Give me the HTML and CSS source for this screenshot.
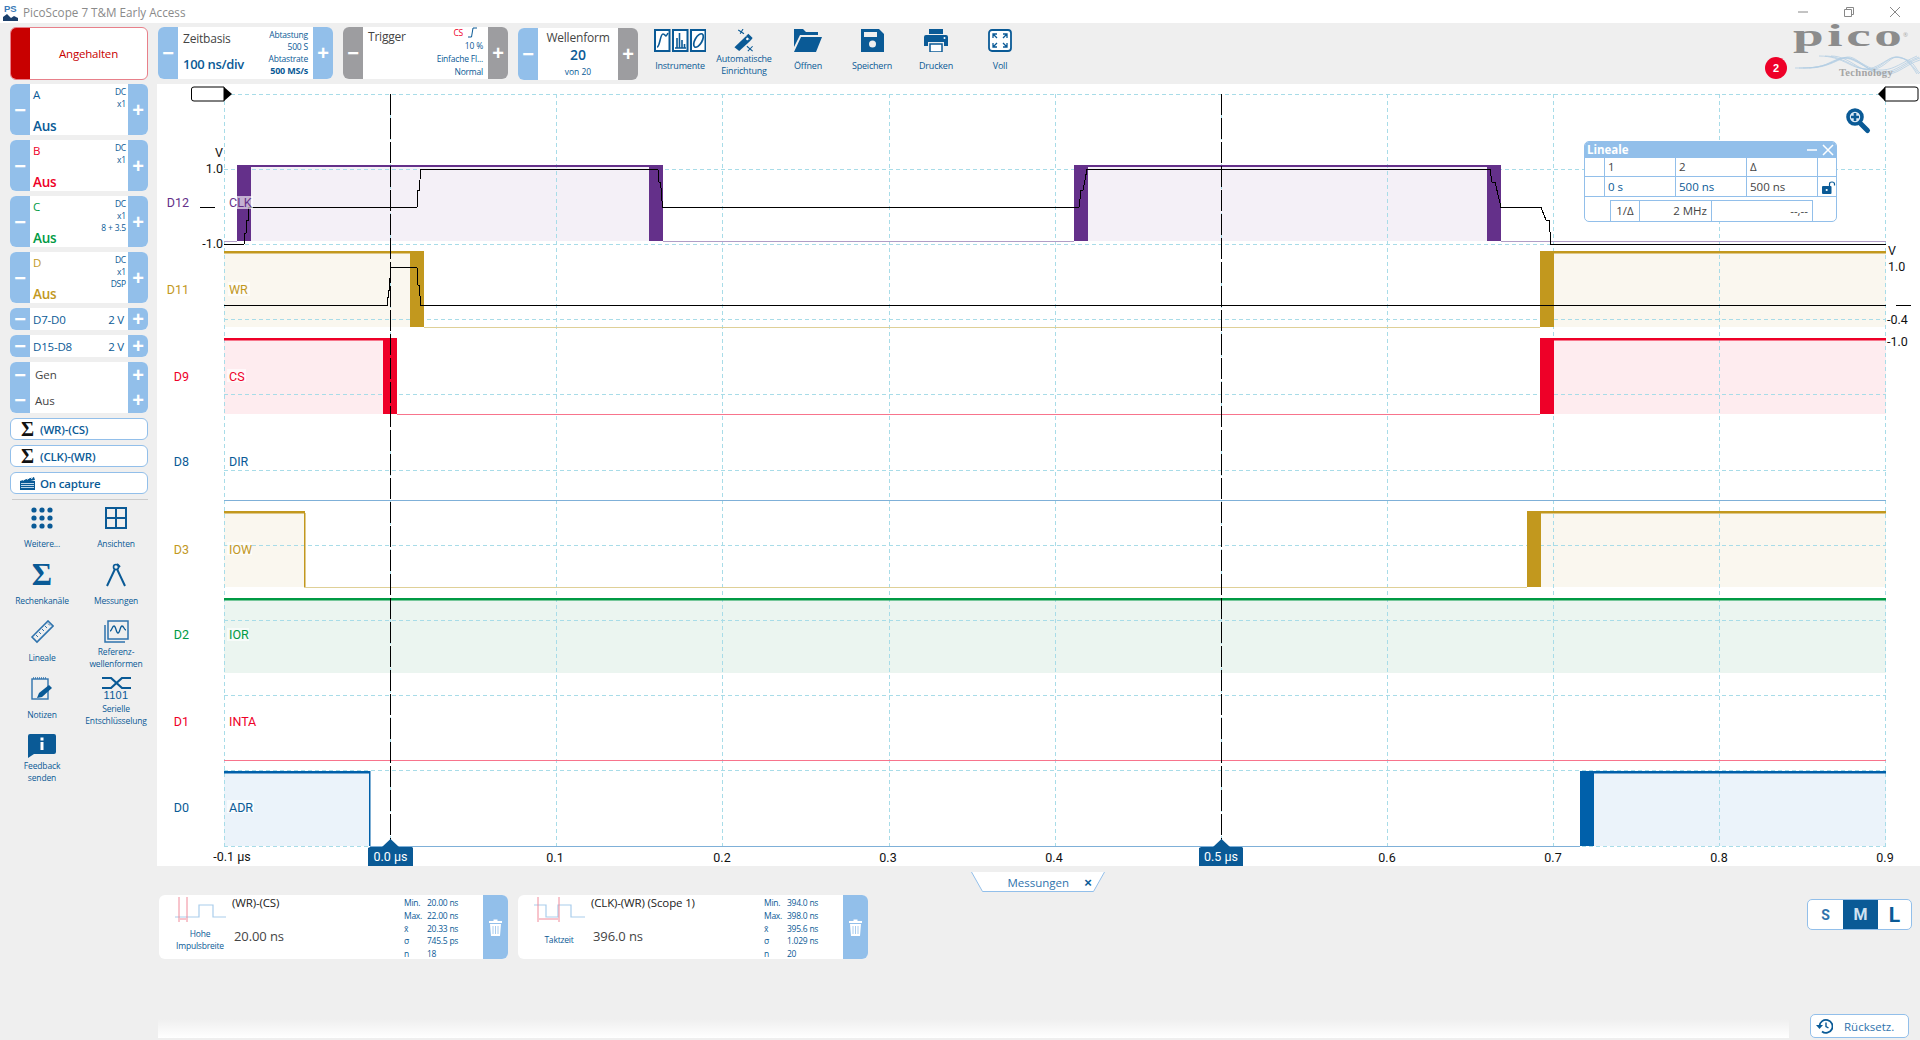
FILE: index.html
```html
<!DOCTYPE html>
<html lang="de">
<head>
<meta charset="utf-8">
<title>PicoScope 7 T&amp;M Early Access</title>
<link rel="stylesheet" href="styles.css">
</head>
<body>
<header class="titlebar">
  <svg class="app-icon" width="16" height="20" viewBox="0 0 16 20"><rect x="0" y="1" width="15" height="18" fill="#fff"/><text x="1" y="10" class="ps">PS</text><path d="M0 15 4 12 8 16 11 14 15 16V19H0Z" fill="#1b3f6b"/></svg>
  <span class="app-name">PicoScope 7 T&amp;M Early Access</span>
  <div class="winctl">
    <svg width="12" height="12" viewBox="0 0 12 12"><path d="M1 6H11" stroke="#888"/></svg>
    <svg width="12" height="12" viewBox="0 0 12 12"><path d="M1.5 3.5H8.5V10.5H1.5ZM3.5 3.5V1.5H10.5V8.5H8.5" fill="none" stroke="#888"/></svg>
    <svg width="12" height="12" viewBox="0 0 12 12"><path d="M1 1 11 11M11 1 1 11" stroke="#888"/></svg>
  </div>
</header>

<div class="toolbar">
  <div class="run-btn"><span class="run-bar"></span><span class="run-text">Angehalten</span></div>

  <div class="stepper w175">
    <span class="strip">−</span>
    <div class="st-body">
      <div class="st-left"><span class="st-title">Zeitbasis</span><span class="st-big">100 ns/div</span></div>
      <div class="st-right"><span>Abtastung</span><span>500 S</span><span>Abtastrate</span><b>500 MS/s</b></div>
    </div>
    <span class="strip">+</span>
  </div>

  <div class="stepper w165">
    <span class="strip gray">−</span>
    <div class="st-body">
      <div class="st-left"><span class="st-title trig-title">Trigger</span></div>
      <div class="st-right trig">
        <span class="trig-top"><i class="red">CS</i><svg width="9" height="11" viewBox="0 0 9 11"><path d="M0 10H3.5L5 1H9" fill="none" stroke="#0a5a96"/></svg></span>
        <span>10 %</span><span>Einfache Fl...</span><span>Normal</span>
      </div>
    </div>
    <span class="strip gray">+</span>
  </div>

  <div class="stepper w120 down1">
    <span class="strip">−</span>
    <div class="st-center"><span class="st-title">Wellenform</span><b>20</b><small>von 20</small></div>
    <span class="strip gray">+</span>
  </div>

  <div class="tools">
    <div class="tool">
      <svg width="52" height="23" viewBox="0 0 52 23"><g fill="#fff" stroke="#0a5a96" stroke-width="2"><rect x="1" y="1" width="14.5" height="21"/><rect x="19" y="1" width="14.5" height="21"/><rect x="37" y="1" width="14.5" height="21"/></g><path d="M3 18C6 18 6 5 9 5S11 10 14 4" fill="none" stroke="#0a5a96" stroke-width="1.6"/><path d="M21 19H32M23 19V9M25.500 19V4M28 19V11M30.500 19V15" fill="none" stroke="#0a5a96" stroke-width="1.6"/><ellipse cx="44.500" cy="11.500" rx="3.500" ry="7.500" transform="rotate(30 44.500 11.500)" fill="none" stroke="#0a5a96" stroke-width="1.7"/></svg>
      <span class="lbl1">Instrumente</span>
    </div>
    <div class="tool">
      <svg width="24" height="24" viewBox="0 0 24 24"><path d="M2 19 14 7.500 19 12 7 23Z" fill="#0a5a96"/><path d="M14 7.500 16.500 5 21 9.500 19 12Z" fill="#0a5a96"/><circle cx="15.500" cy="10.500" r="1.300" fill="#fff"/><path d="M6 1 12 5M11 0 8 5M15 18 21 23M21 18 16 23" stroke="#0a5a96" stroke-width="1.100"/></svg>
      <span class="lbl2">Automatische<br>Einrichtung</span>
    </div>
    <div class="tool">
      <svg width="28" height="23" viewBox="0 0 28 23"><path d="M0 0H9L12 3H24V6H6L0 18Z" fill="#0a5a96"/><path d="M7 8H28L22 23H0Z" fill="#0a5a96"/></svg>
      <span class="lbl1">Öffnen</span>
    </div>
    <div class="tool">
      <svg width="23" height="23" viewBox="0 0 23 23"><path d="M0 0H18L23 5V23H0Z" fill="#0a5a96"/><rect x="3" y="3" width="13" height="5" fill="#efefef"/><circle cx="11.500" cy="15" r="3.500" fill="#efefef"/></svg>
      <span class="lbl1">Speichern</span>
    </div>
    <div class="tool">
      <svg width="24" height="23" viewBox="0 0 24 23"><rect x="5" y="0" width="14" height="5" fill="#0a5a96"/><path d="M2 6H22Q24 6 24 8V17H20V13H4V17H0V8Q0 6 2 6Z" fill="#0a5a96"/><rect x="6" y="15" width="12" height="8" fill="#fff" stroke="#0a5a96" stroke-width="1.500"/><circle cx="20.500" cy="9" r="1" fill="#fff"/></svg>
      <span class="lbl1">Drucken</span>
    </div>
    <div class="tool">
      <svg width="24" height="23" viewBox="0 0 24 23"><rect x="1" y="1" width="22" height="21" rx="3" fill="#fff" stroke="#0a5a96" stroke-width="1.800"/><path d="M5 9V5H9M5 5 9 9M19 9V5H15M19 5 15 9M5 14V18H9M5 18 9 14M19 14V18H15M19 18 15 14" fill="none" stroke="#0a5a96" stroke-width="1.300"/></svg>
      <span class="lbl1">Voll</span>
    </div>
  </div>

  <div class="logo">
    <span class="pico">pico</span>
    <span class="reg">®</span>
    <svg class="logo-wave" width="125" height="20" viewBox="0 0 125 20"><g fill="none" stroke="#b4cee3" stroke-width=".8"><path d="M0 13C16 13 24 13 34 8S50 1 60 5 76 16 88 15 106 8 122 1"/><path d="M4 13C18 13 28 12 38 7S52 2 62 7 78 18 90 17 108 8 124 2"/><path d="M8 13C22 13 32 10 42 5S56 3 66 9 80 19 92 18 110 8 125 3"/><path d="M14 13C26 13 36 9 46 4S60 4 70 11 84 20 94 19 112 9 125 5"/><path d="M24 1C36 1 44 4 54 9S72 16 82 11 96 1 104 2 116 10 122 19"/><path d="M30 1C40 1 48 5 58 10S76 17 86 10 98 1 106 3 118 12 124 19"/><path d="M36 1C46 1 54 6 62 11S80 17 90 9 100 1 110 4 120 14 125 18"/></g></svg>
    <span class="tech">Technology</span>
    <span class="badge">2</span>
  </div>
</div>

<div class="workspace">
  <aside class="side">
    <div class="chan"><span class="strip">−</span><div class="ch-body"><div class="ch-left blue"><span>A</span><b>Aus</b></div><div class="ch-right"><span>DC</span><span>x1</span></div></div><span class="strip">+</span></div>
    <div class="chan"><span class="strip">−</span><div class="ch-body"><div class="ch-left red"><span>B</span><b>Aus</b></div><div class="ch-right"><span>DC</span><span>x1</span></div></div><span class="strip">+</span></div>
    <div class="chan"><span class="strip">−</span><div class="ch-body"><div class="ch-left green"><span>C</span><b>Aus</b></div><div class="ch-right"><span>DC</span><span>x1</span><span>8 + 3.5</span></div></div><span class="strip">+</span></div>
    <div class="chan"><span class="strip">−</span><div class="ch-body"><div class="ch-left gold"><span>D</span><b>Aus</b></div><div class="ch-right"><span>DC</span><span>x1</span><span>DSP</span></div></div><span class="strip">+</span></div>
    <div class="digi"><span class="strip">−</span><div class="dg-body"><span>D7-D0</span><span>2 V</span></div><span class="strip">+</span></div>
    <div class="digi"><span class="strip">−</span><div class="dg-body"><span>D15-D8</span><span>2 V</span></div><span class="strip">+</span></div>
    <div class="gen">
      <div class="gen-row"><span class="strip">−</span><span class="gen-text">Gen</span><span class="strip">+</span></div>
      <div class="gen-row"><span class="strip">−</span><span class="gen-text">Aus</span><span class="strip">+</span></div>
    </div>
    <div class="mbtn"><span class="sig">Σ</span><span>(WR)-(CS)</span></div>
    <div class="mbtn"><span class="sig">Σ</span><span>(CLK)-(WR)</span></div>
    <div class="mbtn">
      <svg class="clap" width="15" height="13" viewBox="0 0 15 13"><rect x="0" y="4" width="15" height="9" fill="#0a5a96"/><path d="M0 4 14 0 15 3 1 6Z" fill="#0a5a96"/><path d="M3 3.500 5 1.800M7 2.500 9 1M11 1.500 13 .5" stroke="#fff"/><path d="M1 6.500H14M1 8.500H14M1 10.500H14" stroke="#bcd6ea"/></svg>
      <span>On capture</span>
    </div>
    <hr class="sep">
    <div class="sidetools">
      <div class="st">
        <svg width="24" height="24" viewBox="0 0 24 24"><g fill="#0a5a96"><circle cx="4" cy="4" r="2.600"/><circle cx="12" cy="4" r="2.600"/><circle cx="20" cy="4" r="2.600"/><circle cx="4" cy="12" r="2.600"/><circle cx="12" cy="12" r="2.600"/><circle cx="20" cy="12" r="2.600"/><circle cx="4" cy="20" r="2.600"/><circle cx="12" cy="20" r="2.600"/><circle cx="20" cy="20" r="2.600"/></g></svg>
        <span class="st-lbl">Weitere...</span>
      </div>
      <div class="st">
        <svg width="22" height="24" viewBox="0 0 22 24"><path d="M1 2H21V22H1ZM11 2V22M1 12H21" fill="none" stroke="#0a5a96" stroke-width="2"/></svg>
        <span class="st-lbl">Ansichten</span>
      </div>
      <div class="st">
        <span class="bigsig">Σ</span>
        <span class="st-lbl">Rechenkanäle</span>
      </div>
      <div class="st">
        <svg width="22" height="24" viewBox="0 0 22 24"><circle cx="11" cy="4" r="2.500" fill="none" stroke="#0a5a96" stroke-width="1.600"/><path d="M10 6 2 23M12 6 20 23M12 1 15 4" fill="none" stroke="#0a5a96" stroke-width="2"/></svg>
        <span class="st-lbl">Messungen</span>
      </div>
      <div class="st">
        <svg width="24" height="24" viewBox="0 0 24 24"><path d="M2 17 18 1 23 6 7 22Z" fill="none" stroke="#2f73ad" stroke-width="1.600"/><path d="M6 15 8 17M9 12 11 14M12 9 14 11M15 6 17 8M18 3.500 20 5.500" stroke="#2f73ad"/></svg>
        <span class="st-lbl">Lineale</span>
      </div>
      <div class="st">
        <svg width="26" height="24" viewBox="0 0 26 24"><rect x="5" y="1" width="20" height="18" fill="none" stroke="#2f73ad" stroke-width="1.500"/><path d="M2 5V22H22" fill="none" stroke="#2f73ad" stroke-width="1.500"/><path d="M7 11C9 11 9 6 11 6S13 13 15 13 17 6 19 6 21 10 23 10" fill="none" stroke="#0a5a96" stroke-width="1.300"/></svg>
        <span class="st-lbl">Referenz-<br>wellenformen</span>
      </div>
      <div class="st">
        <svg width="22" height="24" viewBox="0 0 22 24"><rect x="1" y="2" width="16" height="20" fill="none" stroke="#2f73ad" stroke-width="1.400"/><path d="M2 1H16" stroke="#2f73ad" stroke-width="1.500" stroke-dasharray="1 1"/><path d="M6 21 8 16 18 8 21 11 11 20Z" fill="#0a5a96"/></svg>
        <span class="st-lbl">Notizen</span>
      </div>
      <div class="st st-serial">
        <svg width="29" height="13" viewBox="0 0 29 13"><path d="M0 1H9L20 11H29M0 11H9L20 1H29" fill="none" stroke="#0a5a96" stroke-width="2.200"/></svg>
        <span class="dig">1101</span>
        <span class="st-lbl">Serielle<br>Entschlüsselung</span>
      </div>
      <div class="st">
        <svg width="28" height="24" viewBox="0 0 28 24"><path d="M2 0H26Q28 0 28 2V18Q28 20 26 20H6L0 24V2Q0 0 2 0Z" fill="#0a5a96"/><rect x="12.500" y="8" width="3" height="8" fill="#fff"/><rect x="12.500" y="3.500" width="3" height="3" fill="#fff"/></svg>
        <span class="st-lbl">Feedback<br>senden</span>
      </div>
    </div>
  </aside>

  <main class="content">
    <section class="plot">
      <svg class="scope" width="1763" height="782" viewBox="157 84 1763 782">
        <!-- band fills -->
        <g>
          <path class="f-pur" d="M251 167H649V241H251ZM1088 167H1487V241H1088Z"/>
          <path class="f-gold" d="M224 253H410V327H224ZM1554 253H1886V327H1554ZM224 513H304V587H224ZM1541 513H1886V587H1541Z"/>
          <path class="f-red" d="M224 340H383V414H224ZM1554 340H1886V414H1554Z"/>
          <path class="f-grn" d="M224 600H1886V673H224Z"/>
          <path class="f-blu" d="M224 773H370V846H224ZM1594 773H1886V846H1594Z"/>
        </g>
        <!-- grid -->
        <g class="grid">
          <path d="M224 94H1886M224 169.200H1886M224 244.400H1886M224 319.600H1886M224 394.800H1886M224 470H1886M224 545.200H1886M224 620.400H1886M224 695.600H1886M224 770.800H1886M224 846H1886"/>
          <path d="M224.500 94V846M390.500 94V846M556.500 94V846M722.500 94V846M889.500 94V846M1055.500 94V846M1221.500 94V846M1387.500 94V846M1553.500 94V846M1719.500 94V846M1885.500 94V846"/>
        </g>
        <!-- low lines -->
        <g class="low">
          <path stroke="#b09dc6" d="M224 241.500H237M663 241.500H1074M1501 241.500H1886"/>
          <path stroke="#dfd097" d="M424 327.500H1540M304 587.500H1527"/>
          <path stroke="#f8748c" d="M397 414.500H1540M224 760.500H1886"/>
          <path stroke="#7fb0d8" d="M224 500.500H1886M370 846.500H1580"/>
        </g>
        <!-- highs and transitions -->
        <path class="f-pd" d="M237 165H649V167H251V241H237ZM649 165H663V241H649ZM1074 165H1487V167H1088V241H1074ZM1487 165H1501V241H1487Z"/>
        <path class="f-gd" d="M224 251H424V327H410V253.500H224ZM1540 251H1886V253.500H1554V327H1540ZM224 511H305V513.500H224ZM304 513H305.500V587H304ZM1527 511H1886V513.500H1541V587H1527Z"/>
        <path class="f-rd" d="M224 338H397V414H383V340.500H224ZM1540 338H1886V340.500H1554V414H1540Z"/>
        <rect class="f-gn" x="224" y="598" width="1662" height="2.500"/>
        <path class="f-bd" d="M224 771H370.500V846H369V773.500H224ZM1580 771H1886V773.500H1594V846H1580Z"/>
        <!-- math traces -->
        <g class="trace">
          <path d="M224 244.500H244L245 233H246L247 220H248V207.500H417L418 190H419.500L420.500 169.500H658L659 182H660.500L662.500 207.500H1079L1081 190H1083L1087 169.500H1490L1492 182H1495L1501 207.500H1541L1546 220H1549L1551 244.500H1886"/>
          <path d="M224 305.500H387.500L388.500 290H389.500L390.500 267.500H417L418 285H419.500L420.500 305.500H1886"/>
          <path d="M200 207.500H215M1896 305.500H1911"/>
        </g>
        <!-- row labels -->
        <g class="rowlab">
          <text class="t-pur" x="189" y="207" text-anchor="end">D12</text>
          <text class="t-gold" x="189" y="294" text-anchor="end">D11</text>
          <text class="t-red" x="189" y="381" text-anchor="end">D9</text>
          <text class="t-blu" x="189" y="466" text-anchor="end">D8</text>
          <text class="t-gold" x="189" y="554" text-anchor="end">D3</text>
          <text class="t-grn" x="189" y="639" text-anchor="end">D2</text>
          <text class="t-red" x="189" y="726" text-anchor="end">D1</text>
          <text class="t-blu" x="189" y="812" text-anchor="end">D0</text>
        </g>
        <g class="tagbg">
          <rect x="228" y="196" width="25" height="13"/><rect x="228" y="282" width="22" height="14"/><rect x="227" y="369" width="19" height="13"/><rect x="228" y="454" width="22" height="14"/><rect x="227" y="542" width="25" height="13"/><rect x="227" y="628" width="22" height="13"/><rect x="227" y="800" width="27" height="13"/>
        </g>
        <g class="rowlab">
          <text class="t-pur" x="229" y="207">CLK</text>
          <text class="t-gold" x="229" y="294">WR</text>
          <text class="t-red" x="229" y="381">CS</text>
          <text class="t-blu" x="229" y="466">DIR</text>
          <text class="t-gold" x="229" y="554">IOW</text>
          <text class="t-grn" x="229" y="639">IOR</text>
          <text class="t-red" x="229" y="726">INTA</text>
          <text class="t-blu" x="229" y="812">ADR</text>
        </g>
        <!-- axis labels -->
        <g class="axis">
          <text x="223" y="157" text-anchor="end">V</text>
          <text x="223" y="173" text-anchor="end">1.0</text>
          <text x="223" y="248" text-anchor="end">-1.0</text>
          <text x="1888" y="255">V</text>
          <text x="1888" y="271">1.0</text>
          <text x="1887" y="324">-0.4</text>
          <text x="1887" y="346">-1.0</text>
          <text x="232" y="861" text-anchor="middle">-0.1 µs</text>
          <text x="555" y="862" text-anchor="middle">0.1</text>
          <text x="722" y="862" text-anchor="middle">0.2</text>
          <text x="888" y="862" text-anchor="middle">0.3</text>
          <text x="1054" y="862" text-anchor="middle">0.4</text>
          <text x="1387" y="862" text-anchor="middle">0.6</text>
          <text x="1553" y="862" text-anchor="middle">0.7</text>
          <text x="1719" y="862" text-anchor="middle">0.8</text>
          <text x="1885" y="862" text-anchor="middle">0.9</text>
        </g>
        <!-- cursors -->
        <path class="cursor" d="M390.500 94V840M1221.500 94V840"/>
        <path class="tag" d="M370 847H382L390.500 839 399 847H412L413 848V866H368V848ZM1201 847H1213L1221.500 839 1230 847H1242L1243 848V866H1199V848Z"/>
        <text class="tagtext" x="390.500" y="861" text-anchor="middle">0.0 µs</text>
        <text class="tagtext" x="1221" y="861" text-anchor="middle">0.5 µs</text>
        <!-- drag handles -->
        <path class="handle" d="M224 87H194Q191.500 87 191.500 89V99Q191.500 101 194 101H224Z"/>
        <path d="M224 87 232 94 224 101Z"/>
        <path class="handle" d="M1885 87H1915Q1918 87 1918 89V99Q1918 101 1915 101H1885Z"/>
        <path d="M1885 87 1878 94 1885 101Z"/>
        <!-- zoom icon -->
        <g>
          <path d="M1861 124 1867.500 130.500" stroke="#0a5a96" stroke-width="5" stroke-linecap="round"/>
          <circle cx="1855" cy="117" r="7" fill="#dceaf6" stroke="#0a5a96" stroke-width="3.600"/>
          <path d="M1851 117H1859M1855 113V121" stroke="#0a5a96" stroke-width="2.600"/>
        </g>
      </svg>

      <div class="rulers">
        <div class="r-head"><span>Lineale</span><svg width="28" height="14" viewBox="0 0 28 14"><path d="M0 7H10M16 2 26 12M26 2 16 12" stroke="#fff" stroke-width="1.500"/></svg></div>
        <div class="r-row r-h1"><i></i><i>1</i><i>2</i><i>Δ</i><i></i></div>
        <div class="r-row r-h2"><i></i><i class="bl">0 s</i><i class="bl">500 ns</i><i>500 ns</i><i class="lock"><svg width="14" height="13" viewBox="0 0 14 13"><rect x="0" y="5" width="9.500" height="8" rx="1" fill="#0a5a96"/><circle cx="4.700" cy="9" r="1.100" fill="#fff"/><path d="M7.500 5V3Q7.500 1 10 1T12.500 3V4.500" fill="none" stroke="#0a5a96" stroke-width="1.200"/></svg></i></div>
        <div class="r-last"><i>1/Δ</i><i class="ar">2 MHz</i><i class="ar">--,--</i></div>
      </div>
    </section>

    <section class="bottom">
      <div class="tab">
        <svg class="tab-shape" width="134" height="20" viewBox="0 0 134 20"><path d="M.5 0 11.500 19.500H122.500L133.500 0" fill="#fff" stroke="#92bfea"/></svg>
        <span class="tab-t">Messungen</span><b>×</b>
      </div>
      <div class="cards-row">
        <div class="cards">
          <article class="card">
            <div class="m-pic">
              <svg width="51" height="25" viewBox="0 0 51 25"><path d="M0 20H24V8H38V20H51" fill="none" stroke="#a9cdec" stroke-width="1.200"/><path d="M4 0V25M12 0V25M5 22H11" stroke="#f08a9a"/></svg>
              <span class="m-lab">Hohe<br>Impulsbreite</span>
            </div>
            <div class="m-mid"><span class="m-name">(WR)-(CS)</span><span class="m-val">20.00 ns</span></div>
            <dl class="m-stats"><dt>Min.</dt><dd>20.00 ns</dd><dt>Max.</dt><dd>22.00 ns</dd><dt>x̄</dt><dd>20.33 ns</dd><dt>σ</dt><dd>745.5 ps</dd><dt>n</dt><dd>18</dd></dl>
            <div class="trash"><svg width="13" height="17" viewBox="0 0 13 17"><path d="M0 2H4.500V.5H8.500V2H13V4H0ZM1 5H12L11 17H2ZM4 7V15M6.500 7V15M9 7V15" fill="#fff"/><path d="M4 7V15M6.500 7V15M9 7V15" stroke="#92bfea" stroke-width=".8"/></svg></div>
          </article>
          <article class="card">
            <div class="m-pic">
              <svg width="51" height="25" viewBox="0 0 51 25"><path d="M0 8H12V20H24V8H37V20H51" fill="none" stroke="#a9cdec" stroke-width="1.200"/><path d="M4 0V25M25 0V25M5 22H24" stroke="#f08a9a"/></svg>
              <span class="m-lab">Taktzeit</span>
            </div>
            <div class="m-mid"><span class="m-name">(CLK)-(WR) (Scope 1)</span><span class="m-val">396.0 ns</span></div>
            <dl class="m-stats"><dt>Min.</dt><dd>394.0 ns</dd><dt>Max.</dt><dd>398.0 ns</dd><dt>x̄</dt><dd>395.6 ns</dd><dt>σ</dt><dd>1.029 ns</dd><dt>n</dt><dd>20</dd></dl>
            <div class="trash"><svg width="13" height="17" viewBox="0 0 13 17"><path d="M0 2H4.500V.5H8.500V2H13V4H0ZM1 5H12L11 17H2ZM4 7V15M6.500 7V15M9 7V15" fill="#fff"/><path d="M4 7V15M6.500 7V15M9 7V15" stroke="#92bfea" stroke-width=".8"/></svg></div>
          </article>
        </div>
        <div class="sizes"><span class="sz-s">S</span><span class="sz-m">M</span><span class="sz-l">L</span></div>
      </div>
      <div class="foot">
        <div class="stripe"></div>
        <div class="reset"><svg width="17" height="16" viewBox="0 0 17 16"><path d="M3.500 8A6.500 6.500 0 1 1 6 13.500" fill="none" stroke="#0a5a96" stroke-width="1.800"/><path d="M0 7H7L3.500 11Z" fill="#0a5a96"/><path d="M10 4.500V8.500L12.500 10" fill="none" stroke="#0a5a96" stroke-width="1.400"/></svg><span>Rücksetz.</span></div>
      </div>
    </section>
  </main>
</div>
</body>
</html>
```

FILE: styles.css
```css
* { box-sizing: border-box; }
html, body { margin: 0; padding: 0; overflow: hidden; }
body {
  width: 1920px; height: 1040px;
  background: #efefef; color: #333;
  font-family: "Open Sans", "Noto Sans", sans-serif;
  display: flex; flex-direction: column;
}
.titlebar {
  height: 23px; background: #fff; display: flex; align-items: center; padding-left: 3px; flex: none;
}
.app-icon { margin-right: 4px; }
.ps { font-family: "Liberation Sans", sans-serif; font-size: 9.5px; font-weight: 700; fill: #3a7ab8; }
.app-name { font-size: 11.700px; color: #8a8a8a; }
.winctl { margin-left: auto; display: flex; gap: 34px; padding-right: 19px; }

.toolbar {
  height: 61px; flex: none; display: flex; padding: 4px 0 0 10px; gap: 10px; position: relative;
}
.run-btn {
  width: 138px; height: 53px; background: #fff; border: 1px solid #e8808a; border-radius: 6px;
  overflow: hidden; display: flex; align-items: center;
}
.run-bar { width: 19px; height: 100%; background: #c80000; }
.run-text { flex: 1; text-align: center; color: #c80000; font-size: 11.500px; letter-spacing: -.2px; }

.strip {
  width: 20px; flex: none; background: #92bfea; color: #fff; display: flex; align-items: center; justify-content: center;
  font-size: 20px; font-weight: 700; line-height: 1; font-family: "Liberation Sans", sans-serif;
}
.strip.gray { background: #9d9da0; }
.stepper { height: 52px; display: flex; border-radius: 6px; overflow: hidden; background: #fff; }
.w175 { width: 175px; }
.w165 { width: 165px; }
.w120 { width: 120px; }
.down1 { margin-top: 1px; height: 52px; }
.st-body { flex: 1; display: flex; justify-content: space-between; padding: 2px 5px; }
.st-left { display: flex; flex-direction: column; justify-content: space-between; }
.st-title { font-size: 12px; color: #444; line-height: 20px; letter-spacing: -.2px; }
.trig-title { margin-top: -2px; }
.st-big { font-size: 13px; font-weight: 600; color: #0a5a96; letter-spacing: -.3px; padding-bottom: 3px; line-height: 20px; }
.st-right { display: flex; flex-direction: column; align-items: flex-end; font-size: 8.5px; line-height: 12px; color: #0a5a96; letter-spacing: -.2px; }
.st-right b { font-weight: 700; font-size: 9px; }
.st-right.trig { line-height: 13px; margin-top: -3px; }
.trig-top { display: flex; gap: 5px; align-items: center; padding-right: 6px; }
.trig-top i { font-style: normal; }
.red { color: #ee0028; }
.st-center { flex: 1; display: flex; flex-direction: column; align-items: center; color: #0a5a96; padding-top: 1px; }
.st-center b { font-size: 14px; line-height: 18px; font-weight: 600; }
.st-center small { font-size: 8.5px; line-height: 14px; margin-top: 1px; }
.st-center .st-title { line-height: 17px; }

.tools { display: flex; }
.tool { width: 64px; display: flex; flex-direction: column; align-items: center; padding-top: 2px; color: #0a5a96; }
.tool svg { height: 23px; flex: none; }
.lbl1, .lbl2 { font-size: 9px; line-height: 12px; text-align: center; letter-spacing: -.2px; white-space: nowrap; }
.lbl1 { margin-top: 8px; }
.lbl2 { margin-top: 1px; }

.logo { margin-left: auto; width: 128px; position: relative; color: #8e8e8e; }
.pico { display: block; width: 64px; font-family: "Liberation Serif", serif; font-size: 31px; font-weight: 700; line-height: 28px; letter-spacing: 2px; margin: -5px 0 0 1px; color: #8c8c8c; transform: scaleX(1.780); transform-origin: left center; }
.reg { position: absolute; left: 111px; top: 4px; font-size: 6px; color: #aaa; }
.logo-wave { position: absolute; left: 3px; top: 28px; }
.tech { position: absolute; left: 47px; top: 40px; font-family: "Liberation Serif", serif; font-weight: 700; font-size: 10.500px; letter-spacing: .3px; color: #a5a5a5; }
.badge { position: absolute; left: -27px; top: 30px; width: 22px; height: 22px; border-radius: 50%; background: #ee0028; color: #fff; font-size: 11px; font-weight: 700; display: flex; align-items: center; justify-content: center; font-family: "Liberation Sans", sans-serif; }

.workspace { flex: 1; display: flex; min-height: 0; }
.side { width: 157px; flex: none; padding-left: 10px; }
.chan, .digi, .gen { width: 138px; display: flex; border-radius: 6px; overflow: hidden; background: #fff; margin-bottom: 5px; }
.chan { height: 51px; }
.ch-body { flex: 1; display: flex; justify-content: space-between; padding: 2px 2px 0 3px; }
.ch-left { display: flex; flex-direction: column; justify-content: space-between; font-size: 11.500px; }
.ch-left span { line-height: 14px; margin-top: 2px; }
.ch-left b { font-size: 13.500px; font-weight: 600; line-height: 18px; letter-spacing: -.3px; }
.blue { color: #0a5a96; } .green { color: #009a44; } .gold { color: #c2981e; }
.ch-left.red { color: #ee0028; }
.ch-right { display: flex; flex-direction: column; align-items: flex-end; font-size: 8.5px; line-height: 12px; color: #0a5a96; letter-spacing: -.2px; }
.digi { height: 22px; }
.dg-body { flex: 1; display: flex; justify-content: space-between; align-items: center; padding: 0 4px 0 3px; font-size: 11.500px; color: #0a5a96; letter-spacing: -.2px; }
.gen { height: 51px; flex-direction: column; }
.gen-row { height: 25.500px; display: flex; }
.gen-text { flex: 1; padding-left: 5px; font-size: 11.500px; color: #444; line-height: 25px; }
.mbtn { width: 138px; height: 22px; background: #fff; border: 1px solid #92bfea; border-radius: 6px; margin-bottom: 5px; display: flex; align-items: center; padding-left: 10px; gap: 6px; font-size: 11.500px; font-weight: 600; color: #0a5a96; letter-spacing: -.2px; }
.sig { font-family: "Liberation Serif", serif; font-weight: 700; font-size: 20px; color: #111; line-height: 1; width: 13px; }
.clap { margin-left: -1px; margin-right: -1px; }
.sep { width: 136px; margin: 0 0 0 2px; border: 0; border-top: 1px solid #ccc; height: 1px; }
.sidetools { display: grid; grid-template-columns: 64px 84px; grid-auto-rows: 57px; width: 148px; }
.st { display: flex; flex-direction: column; align-items: center; padding-top: 6px; }
.st > svg { height: 24px; flex: none; }
.st-lbl { font-size: 8.500px; line-height: 12px; text-align: center; color: #0a5a96; height: 24px; display: flex; align-items: center; margin-top: 2px; white-space: nowrap; letter-spacing: -.15px; }
.bigsig { font-family: "Liberation Serif", serif; font-weight: 700; font-size: 31px; line-height: 24px; height: 24px; color: #0a5a96; }
.st-serial > svg { height: 13px; }
.dig { font-size: 11px; line-height: 10px; height: 11px; color: #0a5a96; font-family: "Liberation Sans", sans-serif; letter-spacing: .3px; }

.content { flex: 1; min-width: 0; display: flex; flex-direction: column; }
.plot { height: 782px; flex: none; background: #fff; position: relative; }
.scope { display: block; font-family: Roboto, sans-serif; }
.f-pur { fill: #f4f0f7; } .f-gold { fill: #faf7ef; } .f-red { fill: #feecef; } .f-grn { fill: #ebf5f0; } .f-blu { fill: #ebf3fa; }
.f-pd { fill: #64308a; } .f-gd { fill: #c2981e; } .f-rd { fill: #ee0028; } .f-gn { fill: #009a44; } .f-bd { fill: #0060aa; }
.grid path { fill: none; stroke: #a8dce8; stroke-width: 1; stroke-dasharray: 4 3; shape-rendering: crispEdges; }
.low path { fill: none; stroke-width: 1; shape-rendering: crispEdges; }
.trace path { fill: none; stroke: #000; stroke-width: 1; shape-rendering: crispEdges; }
.tagbg rect { fill: #fff; opacity: .62; }
.rowlab text { font-size: 12.500px; }
.t-pur { fill: #64308a; } .t-gold { fill: #c2981e; } .t-red { fill: #ee0028; } .t-blu { fill: #0a5a96; } .t-grn { fill: #009a44; }
.axis text { font-size: 12.500px; fill: #111; }
.cursor { fill: none; stroke: #000; stroke-width: 1.200; stroke-dasharray: 21 3; shape-rendering: crispEdges; }
.tag { fill: #0a5a96; }
.tagtext { fill: #fff; font-size: 12.500px; }
.handle { fill: #fff; stroke: #000; stroke-width: 1; }

.rulers {
  position: absolute; left: 1427px; top: 57px; width: 253px; height: 81px; background: #fff;
  border: 1px solid #92bfea; border-radius: 5px; overflow: hidden; font-size: 11.500px; color: #444;
}
.r-head { height: 16px; background: #92bfea; color: #fff; font-weight: 700; font-size: 11.500px; display: flex; justify-content: space-between; align-items: center; padding: 0 1px 0 2px; line-height: 16px; }
.r-row { display: grid; grid-template-columns: 20px 71px 71px 71px 19px; border-bottom: 1px solid #92bfea; }
.r-row i { font-style: normal; border-right: 1px solid #92bfea; padding-left: 3px; line-height: 18px; }
.r-row i:last-child { border-right: 0; }
.r-h1 { height: 19px; }
.r-h2 { height: 20px; }
.r-h2 i { line-height: 20px; }
.r-row .bl { color: #0a5a96; }
.r-row .lock { padding: 4px 0 0 4px; line-height: 0; }
.r-last { display: grid; grid-template-columns: 29px 72px 100px; margin: 3px 0 0 25px; width: 203px; height: 22px; border: 1px solid #92bfea; border-bottom: 0; }
.r-last i { font-style: normal; border-right: 1px solid #92bfea; line-height: 20px; text-align: center; }
.r-last i:last-child { border-right: 0; }
.r-last .ar { text-align: right; padding-right: 4px; }

.bottom { flex: 1; display: flex; flex-direction: column; min-height: 0; }
.tab {
  width: 134px; height: 20px; margin: 6px auto 0; position: relative; left: -1px;
  color: #2f73ad; font-size: 11.500px; display: flex; align-items: center; gap: 15px; padding-left: 37px;
}
.tab-shape { position: absolute; left: 0; top: 0; }
.tab-t, .tab b { position: relative; }
.tab b { color: #0a5a96; font-size: 13px; line-height: 1; font-family: "Liberation Sans", sans-serif; }
.cards-row { display: flex; justify-content: space-between; margin-top: 3px; padding: 0 8px 0 2px; }
.cards { display: flex; gap: 10px; }
.card { width: 349px; height: 64px; background: #fff; border-radius: 6px; overflow: hidden; display: flex; }
.card + .card { width: 350px; }
.card + .card .m-mid { width: 173px; }
.m-pic { width: 73px; flex: none; display: flex; flex-direction: column; align-items: center; padding: 2px 0 0 9px; }
.m-pic svg { flex: none; }
.m-lab { font-size: 8.500px; line-height: 12px; text-align: center; color: #0a5a96; height: 36px; display: flex; align-items: center; letter-spacing: -.2px; white-space: nowrap; }
.m-mid { width: 172px; flex: none; display: flex; flex-direction: column; }
.m-name { font-size: 11.500px; color: #222; line-height: 16px; margin-top: 0; letter-spacing: -.15px; }
.m-val { font-size: 13px; color: #444; margin: 17px 0 0 2px; line-height: 16px; letter-spacing: -.1px; }
.m-stats { margin: 0; flex: 1; display: grid; grid-template-columns: 23px auto; grid-auto-rows: 12.800px; padding-top: 1px; font-size: 8.500px; line-height: 13px; color: #0a5a96; letter-spacing: -.25px; white-space: nowrap; }
.m-stats dd { margin: 0; }
.trash { width: 25px; flex: none; background: #92bfea; display: flex; align-items: center; justify-content: center; }
.sizes { width: 105px; height: 31px; margin-top: 4px; border: 1px solid #92bfea; border-radius: 5px; overflow: hidden; background: #fff; display: grid; grid-template-columns: 35px 35px 1fr; font-family: Roboto, sans-serif; font-weight: 700; color: #0a5a96; }
.sizes span { display: flex; align-items: center; justify-content: center; }
.sizes .sz-s { font-size: 14px; color: #2f73ad; }
.sizes .sz-m { font-size: 16px; background: #0a5a96; color: #cfe2f2; }
.sizes .sz-l { font-size: 21px; }
.foot { margin-top: auto; display: flex; align-items: flex-end; padding: 0 11px 2px 1px; justify-content: space-between; }
.stripe { width: 1631px; height: 19px; background: linear-gradient(#efefef, #fff); }
.reset { width: 99px; height: 24px; background: #fff; border: 1px solid #92bfea; border-radius: 5px; display: flex; align-items: center; padding-left: 5px; gap: 11px; color: #2f73ad; font-size: 11.500px; }
```
